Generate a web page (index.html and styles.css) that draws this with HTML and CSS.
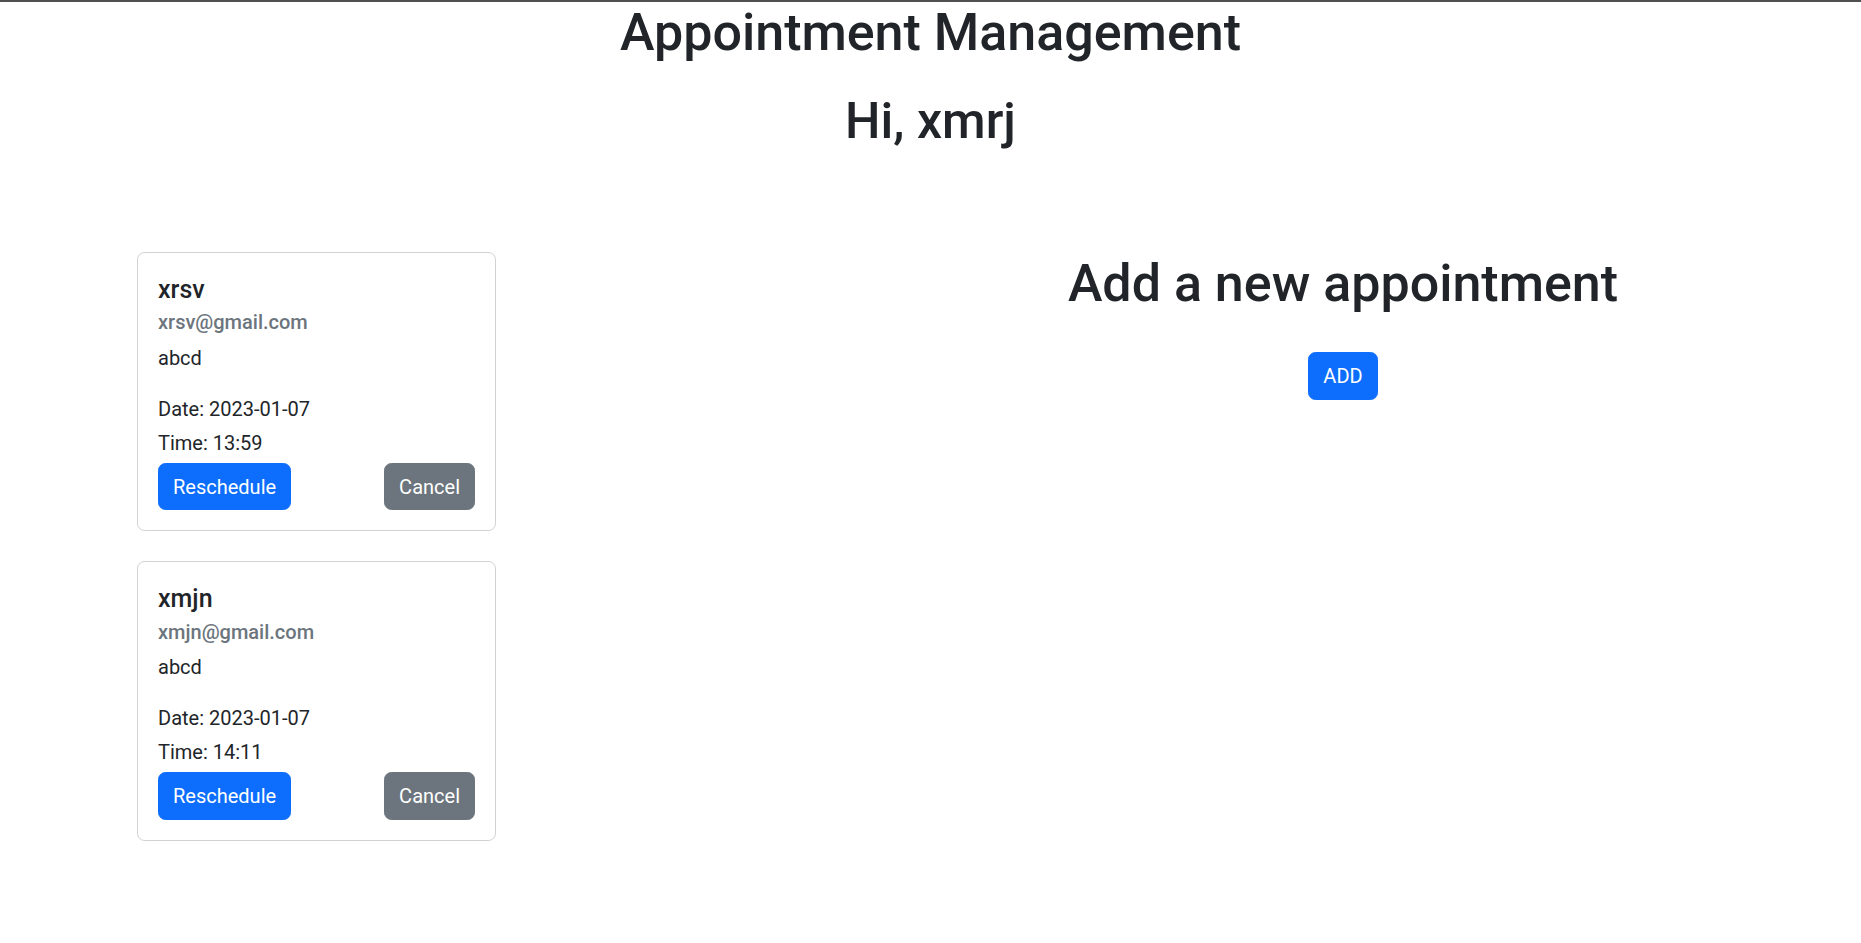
FILE: index.html
```html
<!DOCTYPE html>
<html lang="en">
<head>
<meta charset="utf-8">
<title>Appointment Management</title>
<link rel="stylesheet" href="styles.css">
</head>
<body>
  <header class="page-header">
    <h1 class="page-title">Appointment Management</h1>
    <h1 class="greeting">Hi, xmrj</h1>
  </header>
  <main class="main">
    <section class="appointments">
      <div class="card">
        <h5 class="card-title">xrsv</h5>
        <h6 class="card-subtitle">xrsv@gmail.com</h6>
        <p class="card-text">abcd</p>
        <p class="card-date">Date: 2023-01-07</p>
        <p class="card-time">Time: 13:59</p>
        <div class="card-actions">
          <button class="btn btn-primary">Reschedule</button>
          <button class="btn btn-secondary">Cancel</button>
        </div>
      </div>
      <div class="card">
        <h5 class="card-title">xmjn</h5>
        <h6 class="card-subtitle">xmjn@gmail.com</h6>
        <p class="card-text">abcd</p>
        <p class="card-date">Date: 2023-01-07</p>
        <p class="card-time">Time: 14:11</p>
        <div class="card-actions">
          <button class="btn btn-primary">Reschedule</button>
          <button class="btn btn-secondary">Cancel</button>
        </div>
      </div>
    </section>
    <section class="new-appointment">
      <h1 class="new-title">Add a new appointment</h1>
      <div class="add-wrap">
        <button class="btn btn-primary">ADD</button>
      </div>
    </section>
  </main>
</body>
</html>
```
FILE: styles.css
```css
html, body {
  margin: 0;
  padding: 0;
}
body {
  font-family: Roboto, "Liberation Sans", sans-serif;
  font-size: 20px;
  line-height: 1.5;
  color: #212529;
  background: #fff;
  border-top: 2px solid #505050;
}
.page-header {
  display: flex;
  flex-direction: column;
  align-items: center;
}
.page-title {
  margin: 0;
  font-size: 52px;
  font-weight: 500;
  line-height: 1.2;
}
.greeting {
  margin: 26.5px 0 0;
  font-size: 50px;
  font-weight: 500;
  line-height: 1.2;
}
.main {
  display: flex;
  align-items: flex-start;
  margin-top: 101px;
  padding-left: 137px;
  padding-right: 65px;
}
.appointments {
  width: 359px;
  display: flex;
  flex-direction: column;
  gap: 30px;
}
.card {
  border: 1px solid rgba(0, 0, 0, 0.175);
  border-radius: 7.5px;
  padding: 22px 20px 20px;
  display: flex;
  flex-direction: column;
}
.card-title {
  margin: 0;
  font-size: 25px;
  font-weight: 500;
  line-height: 30px;
}
.card-subtitle {
  margin: 5.5px 0 0;
  font-size: 20px;
  font-weight: 500;
  line-height: 24px;
  color: #6c757d;
}
.card-text {
  margin: 8.5px 0 0;
  line-height: 30px;
}
.card-date {
  margin: 21px 0 0;
  line-height: 30px;
}
.card-time {
  margin: 4px 0 0;
  line-height: 30px;
}
.card-actions {
  margin-top: 5px;
  display: flex;
  justify-content: space-between;
}
.btn {
  font-family: inherit;
  font-size: 20px;
  line-height: 30px;
  padding: 7.75px 14px;
  border: 1px solid transparent;
  border-radius: 7.5px;
  color: #fff;
  cursor: pointer;
}
.btn-primary {
  background: #0d6efd;
  border-color: #0d6efd;
}
.btn-secondary {
  background: #6c757d;
  border-color: #6c757d;
}
.new-appointment {
  flex: 1;
  margin-left: 394px;
  display: flex;
  flex-direction: column;
  align-items: center;
  padding-top: 1px;
}
.new-title {
  margin: 0;
  font-size: 52px;
  font-weight: 500;
  line-height: 1.2;
}
.add-wrap {
  margin-top: 37px;
}
```
